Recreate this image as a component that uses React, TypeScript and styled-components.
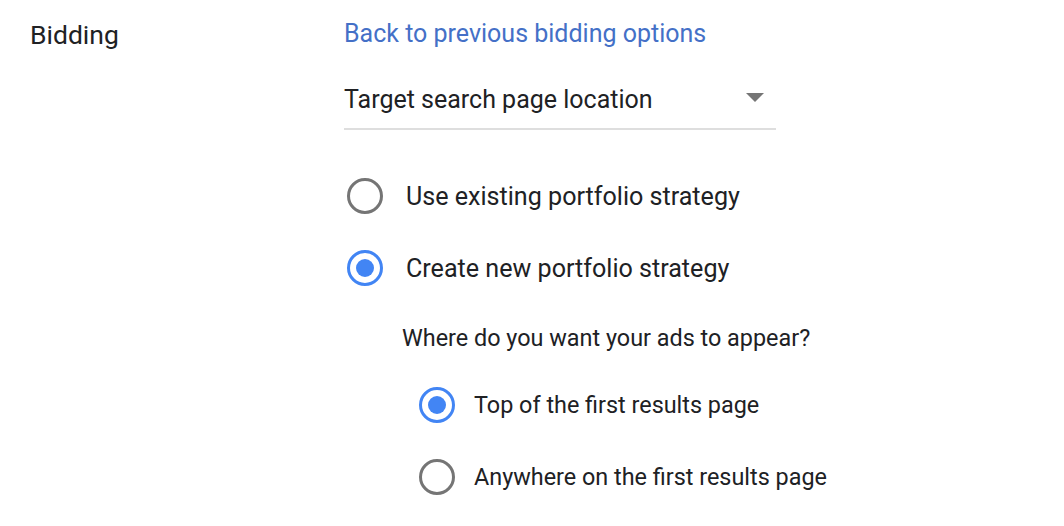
import React from "react";
import styled, { createGlobalStyle } from "styled-components";

const GlobalStyle = createGlobalStyle`
  html, body {
    margin: 0;
    padding: 0;
    background: #ffffff;
  }
  body {
    font-family: Roboto, "Noto Sans", Arial, sans-serif;
    color: #202124;
    -webkit-font-smoothing: antialiased;
  }
`;

const Page = styled.div`
  display: grid;
  grid-template-columns: 314px 1fr;
  padding: 14px 0 0 30px;
  box-sizing: border-box;
  width: 1064px;
  height: 526px;
  overflow: hidden;
`;

const Label = styled.div`
  font-size: 26.5px;
  line-height: 42px;
  color: #202124;
`;

const Column = styled.div`
  display: flex;
  flex-direction: column;
`;

const BackLink = styled.a`
  font-size: 25px;
  line-height: 40px;
  color: #4470c7;
  text-decoration: none;
  cursor: pointer;
  align-self: flex-start;
`;

const Select = styled.div`
  display: flex;
  align-items: center;
  justify-content: space-between;
  width: 432px;
  height: 76px;
  padding: 16px 12px 0 0;
  box-sizing: border-box;
  border-bottom: 2px solid #dedede;
  font-size: 25px;
  color: #202124;
  cursor: pointer;
`;

const Caret = styled.span`
  width: 0;
  height: 0;
  border-left: 9px solid transparent;
  border-right: 9px solid transparent;
  border-top: 9px solid #757575;
  margin-top: -4px;
`;

const RadioGroup = styled.div<{ $indent: number; $top: number }>`
  display: flex;
  flex-direction: column;
  padding-left: ${(p) => p.$indent}px;
  margin-top: ${(p) => p.$top}px;
`;

const RadioRow = styled.label<{ $gap: number; $size: number }>`
  display: flex;
  align-items: center;
  gap: ${(p) => p.$gap}px;
  height: 72px;
  font-size: ${(p) => p.$size}px;
  color: #202124;
  white-space: nowrap;
  cursor: pointer;
`;

const Circle = styled.span<{ $checked: boolean }>`
  flex: none;
  width: 36px;
  height: 36px;
  box-sizing: border-box;
  border-radius: 50%;
  border: 3.5px solid ${(p) => (p.$checked ? "#4285f4" : "#757575")};
  display: flex;
  align-items: center;
  justify-content: center;
  &::after {
    content: "";
    display: ${(p) => (p.$checked ? "block" : "none")};
    width: 18px;
    height: 18px;
    border-radius: 50%;
    background: #4285f4;
  }
`;

const Question = styled.div`
  font-size: 23.4px;
  line-height: 40px;
  color: #202124;
  white-space: nowrap;
  padding-left: 58px;
  margin-top: 14px;
`;

type RadioProps = {
  checked: boolean;
  gap: number;
  size: number;
  children: React.ReactNode;
};

const Radio = ({ checked, gap, size, children }: RadioProps) => (
  <RadioRow $gap={gap} $size={size}>
    <Circle $checked={checked} />
    <span>{children}</span>
  </RadioRow>
);

export default function App() {
  return (
    <>
      <GlobalStyle />
      <Page>
        <Label>Bidding</Label>
        <Column>
          <BackLink>Back to previous bidding options</BackLink>
          <Select>
            <span>Target search page location</span>
            <Caret />
          </Select>
          <RadioGroup $indent={3} $top={30}>
            <Radio checked={false} gap={23} size={25.1}>
              Use existing portfolio strategy
            </Radio>
            <Radio checked={true} gap={23} size={25.1}>
              Create new portfolio strategy
            </Radio>
          </RadioGroup>
          <Question>Where do you want your ads to appear?</Question>
          <RadioGroup $indent={75} $top={11}>
            <Radio checked={true} gap={19} size={23.4}>
              Top of the first results page
            </Radio>
            <Radio checked={false} gap={19} size={23.4}>
              Anywhere on the first results page
            </Radio>
          </RadioGroup>
        </Column>
      </Page>
    </>
  );
}
